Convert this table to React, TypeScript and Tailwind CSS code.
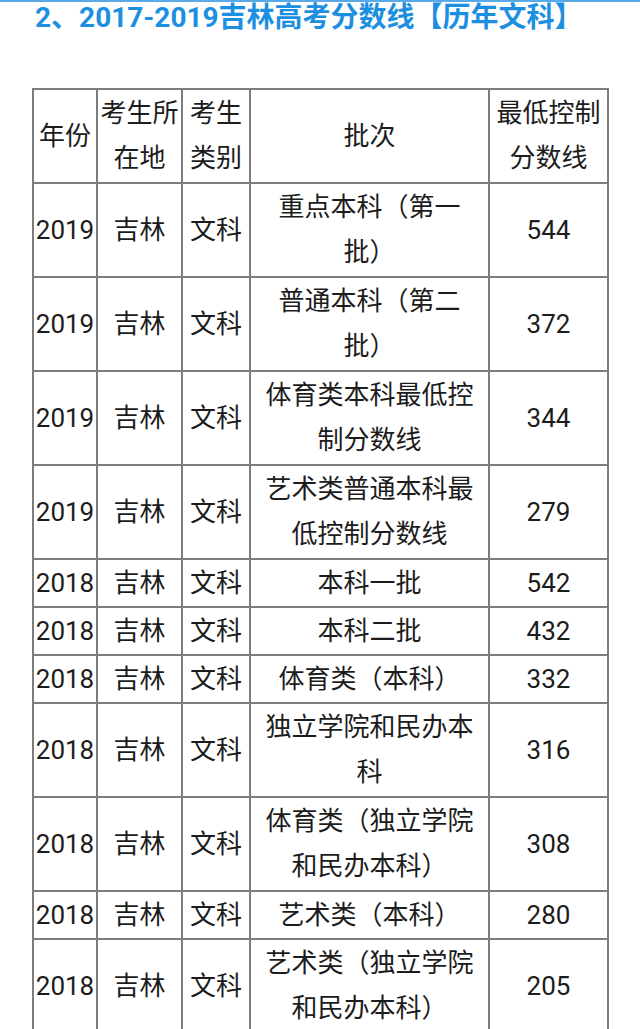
import React from 'react'

interface Row {
  year: string
  place: string
  kind: string
  batch: string[]
  score: string
}

const rows: Row[] = [
  { year: '2019', place: '吉林', kind: '文科', batch: ['重点本科（第一', '批）'], score: '544' },
  { year: '2019', place: '吉林', kind: '文科', batch: ['普通本科（第二', '批）'], score: '372' },
  { year: '2019', place: '吉林', kind: '文科', batch: ['体育类本科最低控', '制分数线'], score: '344' },
  { year: '2019', place: '吉林', kind: '文科', batch: ['艺术类普通本科最', '低控制分数线'], score: '279' },
  { year: '2018', place: '吉林', kind: '文科', batch: ['本科一批'], score: '542' },
  { year: '2018', place: '吉林', kind: '文科', batch: ['本科二批'], score: '432' },
  { year: '2018', place: '吉林', kind: '文科', batch: ['体育类（本科）'], score: '332' },
  { year: '2018', place: '吉林', kind: '文科', batch: ['独立学院和民办本', '科'], score: '316' },
  { year: '2018', place: '吉林', kind: '文科', batch: ['体育类（独立学院', '和民办本科）'], score: '308' },
  { year: '2018', place: '吉林', kind: '文科', batch: ['艺术类（本科）'], score: '280' },
  { year: '2018', place: '吉林', kind: '文科', batch: ['艺术类（独立学院', '和民办本科）'], score: '205' },
]

const header: string[][] = [['年份'], ['考生所', '在地'], ['考生', '类别'], ['批次'], ['最低控制', '分数线']]

function Cell({ lines, tall }: { lines: string[]; tall: boolean }) {
  return (
    <div
      className={`bg-white flex flex-col items-center justify-center text-center whitespace-nowrap leading-[45px] ${
        tall ? 'h-[92px]' : 'h-[46px]'
      }`}
    >
      {lines.map((l, i) => (
        <span key={i}>{l}</span>
      ))}
    </div>
  )
}

export default function App() {
  return (
    <div
      className="min-h-screen bg-white text-[#1c1c1c]"
      style={{ fontFamily: 'Roboto, "Noto Sans CJK SC", sans-serif' }}
    >
      <div className="h-[2px] bg-[#5aaaea]" />
      <div className="h-[32px] leading-[32px] pl-[35px] text-[28px] font-bold text-[#1d8fe1] whitespace-nowrap">
        2、2017-2019吉林高考分数线【历年文科】
      </div>

      <div className="mt-[54px] ml-[32px] w-[577px] grid grid-cols-[62px_83px_66px_237px_117px] gap-[2px] p-[2px] bg-[#7d7d7d] text-[26px]">
        {header.map((h, i) => (
          <Cell key={i} lines={h} tall />
        ))}
        {rows.map((r, i) => {
          const tall = r.batch.length > 1
          return (
            <React.Fragment key={i}>
              <Cell lines={[r.year]} tall={tall} />
              <Cell lines={[r.place]} tall={tall} />
              <Cell lines={[r.kind]} tall={tall} />
              <Cell lines={r.batch} tall={tall} />
              <Cell lines={[r.score]} tall={tall} />
            </React.Fragment>
          )
        })}
      </div>
    </div>
  )
}
